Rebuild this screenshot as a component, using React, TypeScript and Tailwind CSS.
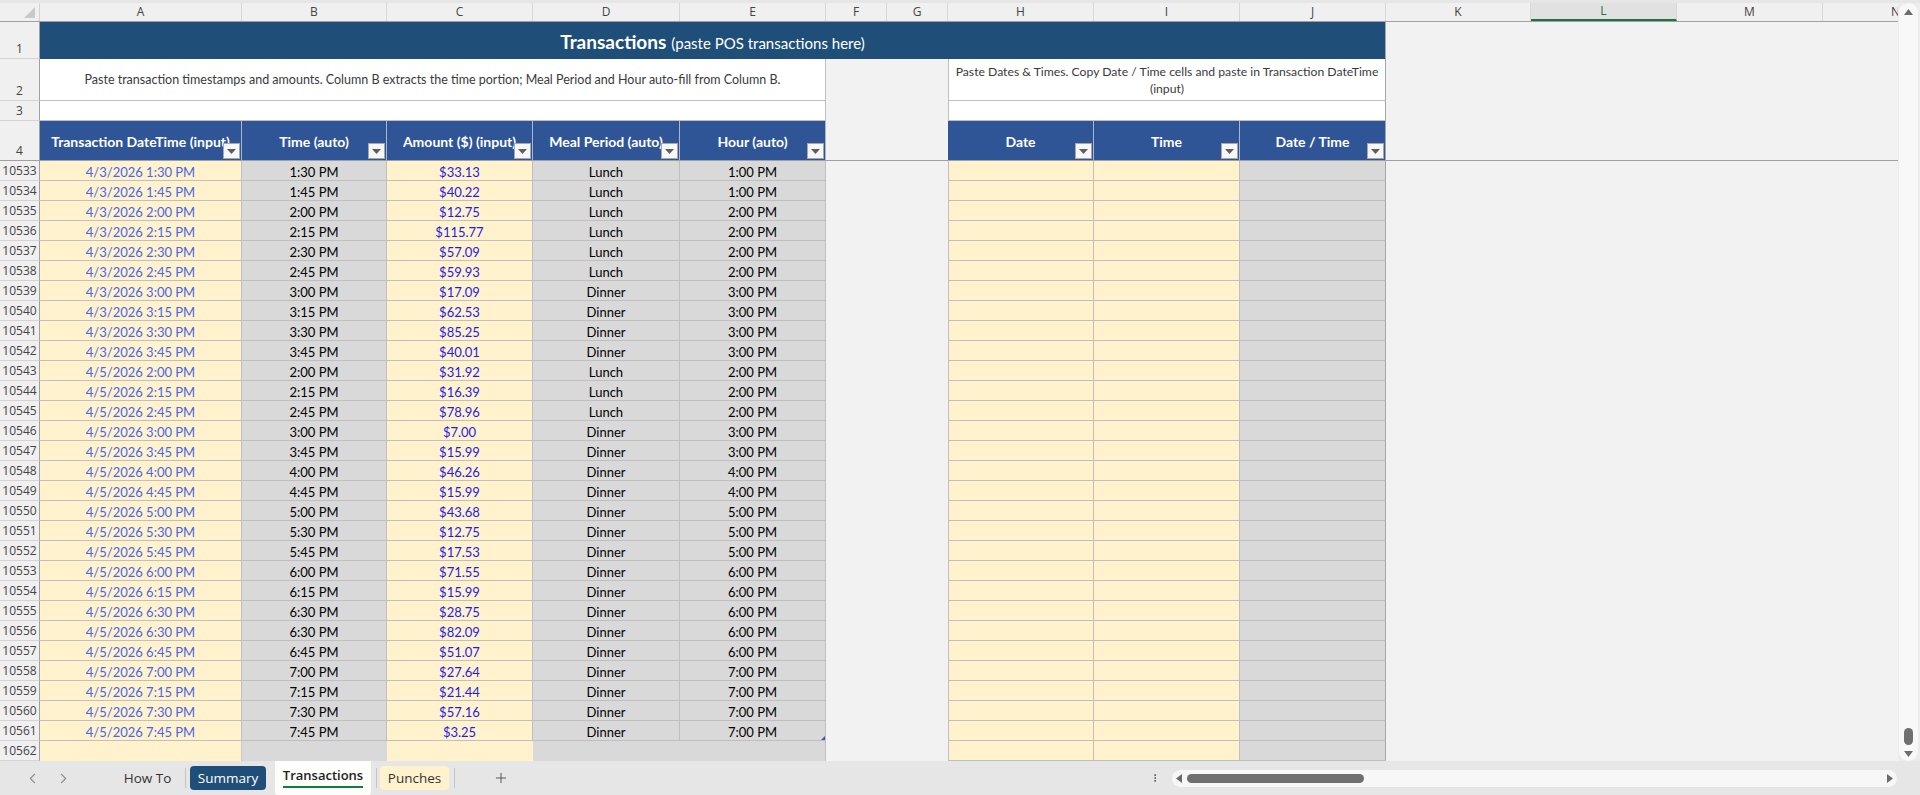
import { ChevronLeft, ChevronRight, EllipsisVertical, Plus } from "lucide-react";

const GRID =
  "grid grid-cols-[40px_202px_145px_146px_147px_146px_61px_61px_146px_146px_146px_145px_146px_146px_146px]";

const CELL_FONT = "font-['Lato','Liberation_Sans',sans-serif]";
const UI_FONT = "font-['Open_Sans','Noto_Sans',sans-serif]";

type Row = [string, string, string, string, string];

const rows: Row[] = [
  ["4/3/2026 1:30 PM", "1:30 PM", "$33.13", "Lunch", "1:00 PM"],
  ["4/3/2026 1:45 PM", "1:45 PM", "$40.22", "Lunch", "1:00 PM"],
  ["4/3/2026 2:00 PM", "2:00 PM", "$12.75", "Lunch", "2:00 PM"],
  ["4/3/2026 2:15 PM", "2:15 PM", "$115.77", "Lunch", "2:00 PM"],
  ["4/3/2026 2:30 PM", "2:30 PM", "$57.09", "Lunch", "2:00 PM"],
  ["4/3/2026 2:45 PM", "2:45 PM", "$59.93", "Lunch", "2:00 PM"],
  ["4/3/2026 3:00 PM", "3:00 PM", "$17.09", "Dinner", "3:00 PM"],
  ["4/3/2026 3:15 PM", "3:15 PM", "$62.53", "Dinner", "3:00 PM"],
  ["4/3/2026 3:30 PM", "3:30 PM", "$85.25", "Dinner", "3:00 PM"],
  ["4/3/2026 3:45 PM", "3:45 PM", "$40.01", "Dinner", "3:00 PM"],
  ["4/5/2026 2:00 PM", "2:00 PM", "$31.92", "Lunch", "2:00 PM"],
  ["4/5/2026 2:15 PM", "2:15 PM", "$16.39", "Lunch", "2:00 PM"],
  ["4/5/2026 2:45 PM", "2:45 PM", "$78.96", "Lunch", "2:00 PM"],
  ["4/5/2026 3:00 PM", "3:00 PM", "$7.00", "Dinner", "3:00 PM"],
  ["4/5/2026 3:45 PM", "3:45 PM", "$15.99", "Dinner", "3:00 PM"],
  ["4/5/2026 4:00 PM", "4:00 PM", "$46.26", "Dinner", "4:00 PM"],
  ["4/5/2026 4:45 PM", "4:45 PM", "$15.99", "Dinner", "4:00 PM"],
  ["4/5/2026 5:00 PM", "5:00 PM", "$43.68", "Dinner", "5:00 PM"],
  ["4/5/2026 5:30 PM", "5:30 PM", "$12.75", "Dinner", "5:00 PM"],
  ["4/5/2026 5:45 PM", "5:45 PM", "$17.53", "Dinner", "5:00 PM"],
  ["4/5/2026 6:00 PM", "6:00 PM", "$71.55", "Dinner", "6:00 PM"],
  ["4/5/2026 6:15 PM", "6:15 PM", "$15.99", "Dinner", "6:00 PM"],
  ["4/5/2026 6:30 PM", "6:30 PM", "$28.75", "Dinner", "6:00 PM"],
  ["4/5/2026 6:30 PM", "6:30 PM", "$82.09", "Dinner", "6:00 PM"],
  ["4/5/2026 6:45 PM", "6:45 PM", "$51.07", "Dinner", "6:00 PM"],
  ["4/5/2026 7:00 PM", "7:00 PM", "$27.64", "Dinner", "7:00 PM"],
  ["4/5/2026 7:15 PM", "7:15 PM", "$21.44", "Dinner", "7:00 PM"],
  ["4/5/2026 7:30 PM", "7:30 PM", "$57.16", "Dinner", "7:00 PM"],
  ["4/5/2026 7:45 PM", "7:45 PM", "$3.25", "Dinner", "7:00 PM"],
];

const letters = ["A", "B", "C", "D", "E", "F", "G", "H", "I", "J", "K", "L", "M", "N"];

const RowHead = ({ n, bottom }: { n: string; bottom?: boolean }) => (
  <div
    className={`flex justify-center leading-[16px] ${bottom ? "items-end pb-[1px]" : "items-center"} bg-[#f0f0f0] border-r border-[#a0a0a0] border-b border-b-[#d4d4d4] text-[12px] text-[#444] ${UI_FONT}`}
  >
    {n}
  </div>
);

const FilterBtn = () => (
  <div className="absolute right-[1px] bottom-[1px] w-[17px] h-[16px] bg-[#f7f7f7] border border-[#a8a8a8] flex items-center justify-center">
    <svg width="9" height="5" viewBox="0 0 9 5">
      <path d="M0 0 H9 L4.5 5 Z" fill="#5f5f5f" />
    </svg>
  </div>
);

const HeadCell = ({ label, last }: { label: string; last?: boolean }) => (
  <div
    className={`relative flex items-center justify-center pt-[2px] bg-[#2f5597] border-r ${
      last ? "border-[#a6a6a6]" : "border-[#aab6cf]"
    } text-white font-bold text-[14px] leading-[18px] whitespace-nowrap overflow-hidden`}
  >
    {label}
    <FilterBtn />
  </div>
);

const Filler = ({ span }: { span: string }) => <div className={`${span} bg-[#f2f2f2]`} />;

const cellBase = "border-r border-b border-[#bfbfbf] flex items-center justify-center pt-[2px]";

export default function App() {
  return (
    <div className={`w-[1920px] h-[795px] overflow-hidden bg-[#e6e6e6] flex flex-col ${CELL_FONT}`}>
      <div className="h-[3px] shrink-0 bg-[#e6e6e6]" />
      <div className="flex h-[758px] shrink-0">
        <div className="w-[1898px] flex flex-col bg-[#f2f2f2] overflow-hidden">
          {/* column letters */}
          <div className={`${GRID} h-[19px] shrink-0 bg-[#f0f0f0] border-b border-[#a0a0a0] leading-[16px]`}>
            <div className="relative border-r border-[#d4d4d4]">
              <svg className="absolute right-[4px] bottom-[3px]" width="11" height="11" viewBox="0 0 11 11">
                <path d="M11 0 V11 H0 Z" fill="#c9c9c9" />
              </svg>
            </div>
            {letters.map((l) => (
              <div
                key={l}
                className={`flex items-center justify-center text-[12px] border-r border-[#d8d8d8] ${UI_FONT} ${
                  l === "L"
                    ? "bg-[#e1e1e1] text-[#217346] border-b-2 border-b-[#217346]"
                    : "text-[#444]"
                }`}
              >
                {l}
              </div>
            ))}
          </div>

          {/* row 1 */}
          <div className={`${GRID} h-[37px] shrink-0`}>
            <RowHead n="1" bottom />
            <div className="col-span-10 bg-[#1f4e79] border-r border-[#a6a6a6] flex items-center justify-center pt-[3px] text-white leading-[24px]">
              <span className="font-bold text-[19px]">Transactions</span>
              <span className="text-[15px] ml-[5px] mt-[2px]">(paste POS transactions here)</span>
            </div>
            <Filler span="col-span-4" />
          </div>

          {/* row 2 */}
          <div className={`${GRID} h-[42px] shrink-0`}>
            <RowHead n="2" bottom />
            <div className="col-span-5 bg-white border-r border-b border-[#bfbfbf] flex items-center justify-center text-[12.5px] leading-[17px] text-[#3a3a3a] whitespace-nowrap overflow-hidden">
              Paste transaction timestamps and amounts. Column B extracts the time portion; Meal Period and Hour auto-fill from Column B.
            </div>
            <Filler span="col-span-2" />
            <div className="col-span-3 bg-white border-l border-b border-[#bfbfbf] border-r border-r-[#a6a6a6] flex flex-col items-center justify-center text-[12.2px] leading-[17px] text-[#3a3a3a] whitespace-nowrap overflow-hidden">
              <span>Paste Dates &amp; Times. Copy Date / Time cells and paste in Transaction DateTime</span>
              <span>(input)</span>
            </div>
            <Filler span="col-span-4" />
          </div>

          {/* row 3 */}
          <div className={`${GRID} h-[20px] shrink-0`}>
            <RowHead n="3" bottom />
            <div className="col-span-5 bg-white border-r border-b border-[#bfbfbf]" />
            <Filler span="col-span-2" />
            <div className="col-span-3 bg-white border-l border-b border-[#bfbfbf] border-r border-r-[#a6a6a6]" />
            <Filler span="col-span-4" />
          </div>

          {/* row 4 */}
          <div className={`${GRID} h-[40px] shrink-0 border-b border-[#a0a0a0]`}>
            <div className={`flex justify-center items-end pb-[1px] leading-[16px] bg-[#f0f0f0] border-r border-[#a0a0a0] text-[12px] text-[#444] ${UI_FONT}`}>
              4
            </div>
            <HeadCell label="Transaction DateTime (input)" />
            <HeadCell label="Time (auto)" />
            <HeadCell label="Amount ($) (input)" />
            <HeadCell label="Meal Period (auto)" />
            <HeadCell label="Hour (auto)" />
            <Filler span="col-span-2" />
            <HeadCell label="Date" />
            <HeadCell label="Time" />
            <HeadCell label="Date / Time" last />
            <Filler span="col-span-4" />
          </div>

          {/* data rows */}
          {rows.map((r, i) => (
            <div key={i} className={`${GRID} h-[20px] shrink-0 text-[13px] leading-[16px]`}>
              <RowHead n={String(10533 + i)} />
              <div className={`${cellBase} bg-[#fff2cc] text-[#4766ee]`}>{r[0]}</div>
              <div className={`${cellBase} bg-[#d9d9d9] text-black`}>{r[1]}</div>
              <div className={`${cellBase} bg-[#fff2cc] text-[#1c1cf0]`}>{r[2]}</div>
              <div className={`${cellBase} bg-[#d9d9d9] text-black`}>{r[3]}</div>
              <div className={`${cellBase} relative bg-[#d9d9d9] text-black`}>
                {r[4]}
                {i === rows.length - 1 && (
                  <svg className="absolute right-0 bottom-0" width="4" height="4" viewBox="0 0 4 4">
                    <path d="M4 0 V4 H0 Z" fill="#3b57b8" />
                  </svg>
                )}
              </div>
              <Filler span="col-span-2" />
              <div className="bg-[#fff2cc] border-l border-r border-b border-[#bfbfbf]" />
              <div className="bg-[#fff2cc] border-r border-b border-[#bfbfbf]" />
              <div className="bg-[#d9d9d9] border-b border-[#bfbfbf] border-r border-r-[#a6a6a6]" />
              <Filler span="col-span-4" />
            </div>
          ))}

          {/* row 10562 */}
          <div className={`${GRID} h-[20px] shrink-0 leading-[16px]`}>
            <RowHead n="10562" />
            <div className="bg-[#fff2cc] border-r border-[#c8c8c8]" />
            <div className="bg-[#d9d9d9]" />
            <div className="bg-[#fff2cc]" />
            <div className="col-span-2 bg-[#d9d9d9] border-r border-[#bfbfbf]" />
            <Filler span="col-span-2" />
            <div className="bg-[#fff2cc] border-l border-r border-b border-[#bfbfbf]" />
            <div className="bg-[#fff2cc] border-r border-b border-[#bfbfbf]" />
            <div className="bg-[#d9d9d9] border-b border-[#bfbfbf] border-r border-r-[#a6a6a6]" />
            <Filler span="col-span-4" />
          </div>
        </div>

        {/* vertical scrollbar */}
        <div className="w-[22px] bg-[#ececec] flex justify-center pl-[1px] pr-[2px]">
          <div className="w-full h-full rounded-full bg-[#f8f8f8] flex flex-col items-center pt-[6px] pb-[4px]">
            <svg width="9" height="6" viewBox="0 0 9 6">
              <path d="M4.5 0 L9 6 H0 Z" fill="#6b6b6b" />
            </svg>
            <div className="flex-1" />
            <div className="w-[9px] h-[17px] rounded-full bg-[#6f6f6f]" />
            <svg className="mt-[6px]" width="9" height="6" viewBox="0 0 9 6">
              <path d="M0 0 H9 L4.5 6 Z" fill="#6b6b6b" />
            </svg>
          </div>
        </div>
      </div>

      {/* sheet tabs */}
      <div className={`h-[34px] shrink-0 flex items-center bg-[#e6e6e6] text-[13.5px] ${UI_FONT}`}>
        <div className="w-[16px]" />
        <div className="w-[32px] flex justify-center">
          <ChevronLeft size={17} strokeWidth={1.5} color="#8c8c8c" />
        </div>
        <div className="w-[30px] flex justify-center">
          <ChevronRight size={17} strokeWidth={1.5} color="#8c8c8c" />
        </div>
        <div className="w-[32px]" />
        <div className="w-[75px] flex justify-center text-[#333]">How To</div>
        <div className="w-px h-[20px] bg-[#c4c4c4]" />
        <div className="w-[4px]" />
        <div className="w-[76px] h-[24px] rounded-[4px] bg-[#1f4e79] text-white flex items-center justify-center">
          Summary
        </div>
        <div className="w-[9px]" />
        <div className="w-[96px] h-full bg-[#fdfdf9] flex flex-col items-center pt-[5px] rounded-b-[3px]">
          <span className="font-semibold text-[13px] text-[#222] leading-[18px]">Transactions</span>
          <div className="mt-[2px] w-[80px] h-[2px] bg-[#107c41]" />
        </div>
        <div className="w-[5px]" />
        <div className="w-px h-[20px] bg-[#c4c4c4]" />
        <div className="w-[3px]" />
        <div className="w-[69px] h-[24px] rounded-[4px] bg-[#fff2cc] text-[#333] flex items-center justify-center">
          Punches
        </div>
        <div className="w-[5px]" />
        <div className="w-px h-[20px] bg-[#c4c4c4]" />
        <div className="w-[38px]" />
        <div className="w-[16px] flex justify-center">
          <Plus size={16} strokeWidth={1.3} color="#444" />
        </div>
        <div className="flex-1" />
        <div className="w-[10px] flex justify-center">
          <EllipsisVertical size={14} strokeWidth={2} color="#444" />
        </div>
        <div className="w-[12px]" />
        <div className="w-[725px] h-[17px] rounded-full bg-[#f7f7f7] flex items-center px-[4px]">
          <svg width="6" height="9" viewBox="0 0 6 9">
            <path d="M0 4.5 L6 0 V9 Z" fill="#6b6b6b" />
          </svg>
          <div className="ml-[5px] w-[177px] h-[9px] rounded-full bg-[#6f6f6f]" />
          <div className="flex-1" />
          <svg width="6" height="9" viewBox="0 0 6 9">
            <path d="M6 4.5 L0 0 V9 Z" fill="#6b6b6b" />
          </svg>
        </div>
        <div className="w-[23px]" />
      </div>
    </div>
  );
}
